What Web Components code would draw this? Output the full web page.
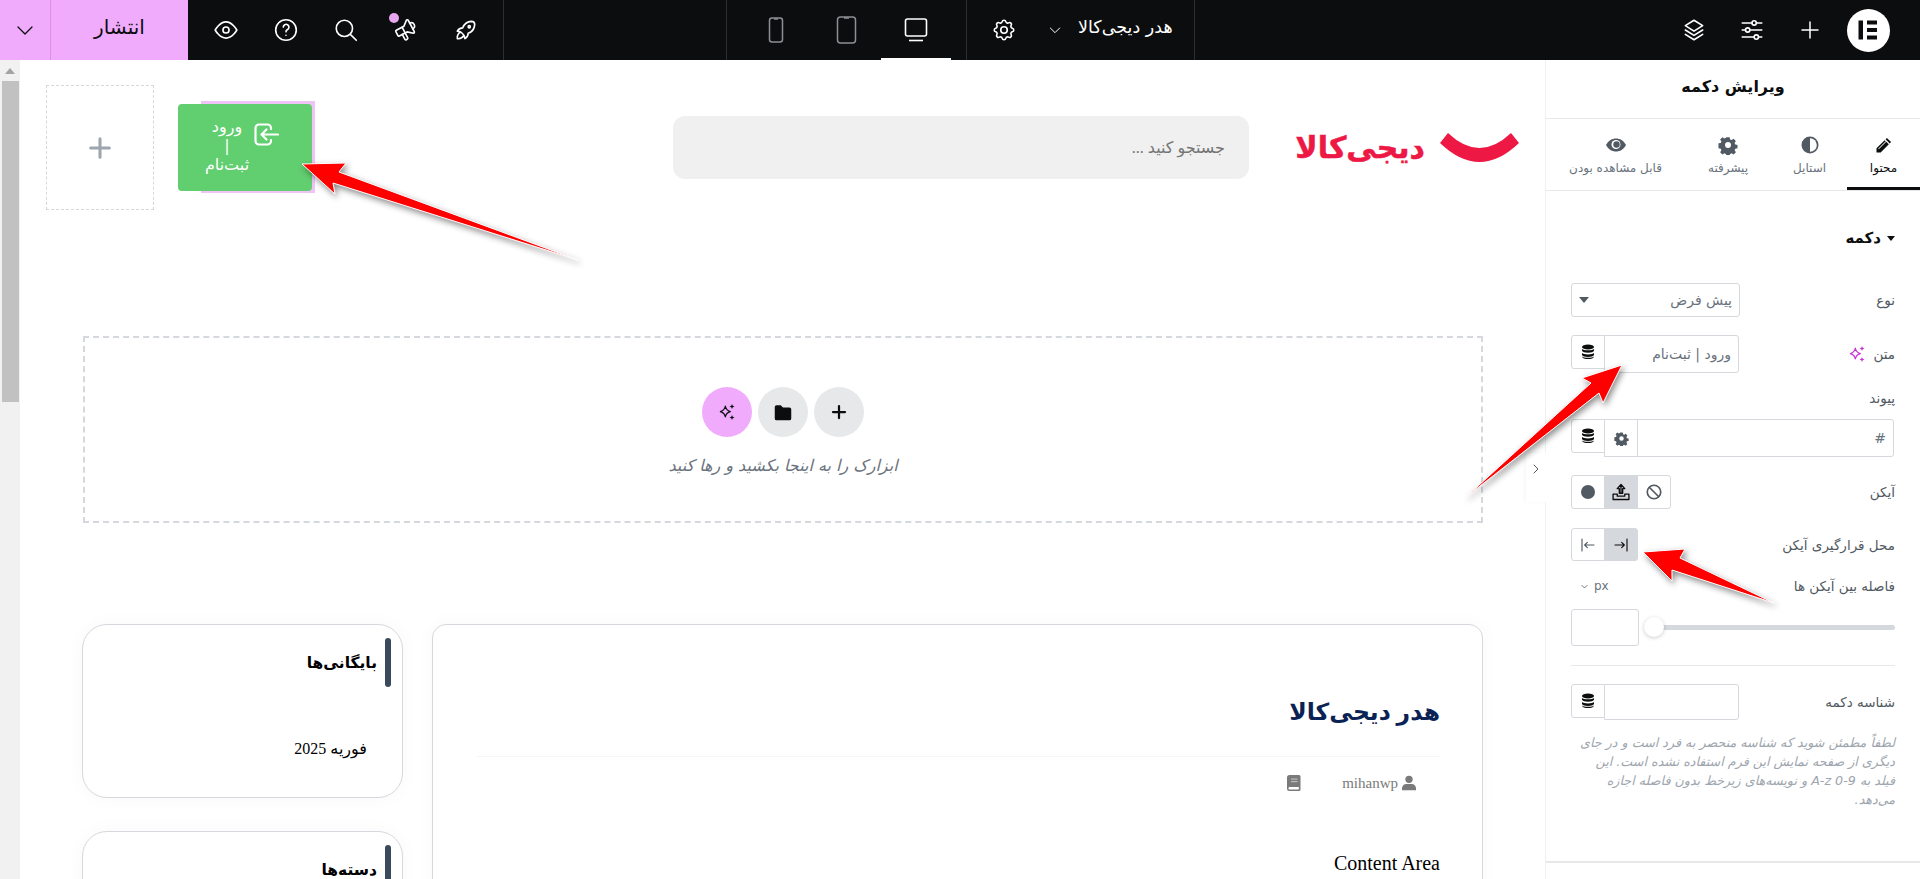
<!DOCTYPE html>
<html lang="fa">
<head>
<meta charset="utf-8">
<title>ویرایش دکمه</title>
<style>
    html, body { margin: 0; padding: 0; height: 879px; overflow: hidden; background: #fff; }
    body { position: relative; font-family: "DejaVu Sans", sans-serif; }
    ed-app { width: 1920px; height: 879px; }
</style>
</head>
<body>
<ed-app></ed-app>
<ed-arrows></ed-arrows>

<script>
const GEAR = 'M10.325 4.317c.426-1.756 2.924-1.756 3.35 0a1.724 1.724 0 0 0 2.573 1.066c1.543-.94 3.31.826 2.37 2.37a1.724 1.724 0 0 0 1.065 2.572c1.756.426 1.756 2.924 0 3.35a1.724 1.724 0 0 0-1.066 2.573c.94 1.543-.826 3.31-2.37 2.37a1.724 1.724 0 0 0-2.572 1.065c-.426 1.756-2.924 1.756-3.35 0a1.724 1.724 0 0 0-2.573-1.066c-1.543.94-3.31-.826-2.37-2.37a1.724 1.724 0 0 0-1.065-2.572c-1.756-.426-1.756-2.924 0-3.35a1.724 1.724 0 0 0 1.066-2.573c-.94-1.543.826-3.31 2.37-2.37c1 .608 2.296.07 2.572-1.065z'

function line(size, inner, width = 1.5) {
    return `<svg width="${size}" height="${size}" viewBox="0 0 24 24" fill="none" stroke="currentColor" stroke-width="${width}" stroke-linecap="round" stroke-linejoin="round">${inner}</svg>`
}
function solid(size, inner) {
    return `<svg width="${size}" height="${size}" viewBox="0 0 24 24" fill="currentColor">${inner}</svg>`
}

const sparkle = `<path d="M10 5c.7 4 2.2 5.6 6 6.500c-3.800.9-5.300 2.500-6 6.500c-.7-4-2.200-5.600-6-6.500c3.800-.9 5.300-2.500 6-6.500z"/><path fill="currentColor" d="M18 2.500l.9 2.100 2.100.9-2.100.9-.9 2.100-.9-2.100-2.100-.9 2.100-.9zM18 15.500l.9 2.100 2.100.9-2.100.9-.9 2.100-.9-2.100-2.100-.9 2.100-.9z" stroke="none"/>`
const dbIcon = `<svg width="14" height="16" viewBox="0 0 14 16" fill="#0c0d0e"><ellipse cx="7" cy="3" rx="6" ry="2.600"/><path d="M1 5c1 1.700 11 1.700 12 0v1.800c-.6 2.600-11.400 2.600-12 0zM1 9c1 1.900 11 1.900 12 0v2c-.6 2.600-11.400 2.600-12 0z"/><path d="M1 12.500c1 1.700 11 1.700 12 0c0 3.400-12 3.400-12 0z"/></svg>`
const COG = '<path fill-rule="evenodd" d="M9.800 1.500h4.400l.6 3 2 .9 2.600-1.700 3.100 3.100-1.700 2.600.9 2 3 .6v4.400l-3 .6-.9 2 1.700 2.600-3.100 3.100-2.600-1.700-2 .9-.6 3H9.800l-.6-3-2-.9-2.600 1.700-3.100-3.100 1.700-2.600-.9-2-3-.6V9.800l3-.6.9-2-1.700-2.600 3.100-3.100 2.600 1.700 2-.9zM12 8a4 4 0 1 0 0 8 4 4 0 0 0 0-8z" transform="translate(1.200 1.200) scale(.9)"/>'

const ICONS = {
    chevron: line(24, '<path d="M5 9l7 7 7-7"/>', 1.3),
    eye: line(26, '<path d="M2 12s4-7.500 10-7.500 10 7.500 10 7.500-4 7.500-10 7.500S2 12 2 12z"/><circle cx="12" cy="12" r="2.800"/>'),
    help: line(26, '<circle cx="12" cy="12" r="9.500"/><path d="M9.500 9.300a2.600 2.600 0 1 1 3.900 2.300c-.9.500-1.400 1.100-1.400 2.100"/><path d="M12 16.800v.1"/>'),
    search: line(26, '<circle cx="10.500" cy="10.500" r="7.500"/><path d="M16 16l5.500 5.500"/>'),
    speaker: line(26, '<g transform="rotate(-28 12 12)"><path d="M18 8a3 3 0 0 1 0 6"/><path d="M10 8v11a1 1 0 0 1-1 1H8a1 1 0 0 1-1-1v-5"/><path d="M12 8l4.700-3.900A1 1 0 0 1 18 5v12a1 1 0 0 1-1.300.9L12 14H4a1 1 0 0 1-1-1V9a1 1 0 0 1 1-1h8"/></g>'),
    rocket: line(26, '<path d="M4 13a8 8 0 0 1 7 7a6 6 0 0 0 3-5a9 9 0 0 0 6-8a3 3 0 0 0-3-3a9 9 0 0 0-8 6a6 6 0 0 0-5 3"/><path d="M7 14a6 6 0 0 0-3 6a6 6 0 0 0 6-3"/><circle cx="15" cy="9" r="1"/>'),
    phone: `<svg width="16" height="26" viewBox="0 0 16 26" fill="none" stroke="currentColor" stroke-width="1.500"><rect x="1.500" y="1" width="13" height="24" rx="2.500"/><path d="M6 2h4"/></svg>`,
    tablet: `<svg width="21" height="28" viewBox="0 0 21 28" fill="none" stroke="currentColor" stroke-width="1.500"><rect x="1.500" y="1" width="18" height="26" rx="3"/><path d="M8 2h5"/></svg>`,
    desktop: `<svg width="24" height="24" viewBox="0 0 24 24" fill="none" stroke="currentColor" stroke-width="1.600"><rect x="1.500" y="1" width="21" height="17" rx="2"/><path d="M5 22.500h14"/></svg>`,
    gear: line(26, `<path d="${GEAR}"/><circle cx="12" cy="12" r="3"/>`),
    plus: line(24, '<path d="M12 4v16M4 12h16"/>'),
    sliders: line(26, '<path d="M3 5.500h9M16 5.500h5M3 12h3M10 12h11M3 18.500h11M18 18.500h3"/><circle cx="14" cy="5.500" r="2"/><circle cx="8" cy="12" r="2"/><circle cx="16" cy="18.500" r="2"/>'),
    layers: line(26, '<path d="M12 3l8 5-8 5-8-5z"/><path d="M4 12l8 5 8-5"/><path d="M4 16l8 5 8-5"/>'),
    pencil: solid(20, '<path d="M15.500 3.500l5 5-1.600 1.600-5-5zM12.800 6.200l5 5L8 21H3v-5z"/><path fill="#fff" d="M5 16.500l9-9 .7.700-9 9z"/>'),
    contrast: `<svg width="20" height="20" viewBox="0 0 20 20"><circle cx="10" cy="10" r="8.500" fill="#515962"/><path d="M10 3.200a6.800 6.800 0 0 1 0 13.600z" fill="#fff"/></svg>`,
    cog: `<svg width="20" height="20" viewBox="0 0 24 24" fill="currentColor">${COG}</svg>`,
    cogSmall: `<svg width="15" height="15" viewBox="0 0 24 24" fill="currentColor">${COG}</svg>`,
    eyeFill: `<svg width="22" height="16" viewBox="0 0 22 16"><path d="M1 8c2.500-4.500 6-6.500 10-6.500S18.500 3.500 21 8c-2.500 4.500-6 6.500-10 6.500S3.500 12.500 1 8z" fill="#515962"/><circle cx="11" cy="7.500" r="4.500" fill="#fff"/><circle cx="11.500" cy="7.500" r="3.200" fill="#515962"/></svg>`,
    ban: line(18, '<circle cx="12" cy="12" r="9"/><path d="M6 6l12 12"/>', 2.200),
    upload: line(20, '<path d="M2.500 14.500h5v2.500h9v-2.500h5v6.500h-19z"/><path d="M12 13V4M7.500 8L12 3l4.500 5h-2.500v5.500H10V8z"/>', 1.600),
    dot: `<svg width="14" height="14" viewBox="0 0 14 14"><circle cx="7" cy="7" r="7" fill="#515962"/></svg>`,
    alignL: line(16, '<path d="M3 3v18M21 12H7M11 8l-4 4 4 4"/>', 1.700),
    alignR: line(16, '<path d="M21 3v18M3 12h14M13 8l4 4-4 4"/>', 1.700),
    sparkle: line(20, sparkle, 1.400),
    folder: solid(22, '<path d="M3 6.500a2 2 0 0 1 2-2h4.500l2.500 2.500h7a2 2 0 0 1 2 2V19a2 2 0 0 1-2 2H5a2 2 0 0 1-2-2z"/>'),
    plusBold: line(18, '<path d="M12 4v16M4 12h16"/>', 3),
    login: `<svg width="25" height="23" viewBox="0 0 25 23" fill="none" stroke="#fff" stroke-width="2.200" stroke-linecap="round" stroke-linejoin="round"><path d="M17 6V5a3.500 3.500 0 0 0-3.500-3.500H5A3.500 3.500 0 0 0 1.500 5v13A3.500 3.500 0 0 0 5 21.500h8.500A3.500 3.500 0 0 0 17 18v-1"/><path d="M24 11.500H8M12.500 6.500l-5 5 5 5"/></svg>`,
    user: solid(16, '<circle cx="12" cy="6.500" r="5.500"/><path d="M1.500 23v-3a6.500 6.500 0 0 1 6.500-6.500h8a6.500 6.500 0 0 1 6.500 6.500v3z"/>'),
    book: `<svg width="14" height="16" viewBox="0 0 14 16"><path d="M2.500 0H12a1.500 1.500 0 0 1 1.500 1.500v13A1.500 1.500 0 0 1 12 16H2.500A2.500 2.500 0 0 1 0 13.500v-11A2.500 2.500 0 0 1 2.500 0z" fill="#7a7a7a"/><rect x="1.500" y="12" width="10.500" height="2.500" rx="1" fill="#fff"/><rect x="4" y="3.500" width="6.500" height="1.200" fill="#bbb"/><rect x="4" y="6" width="6.500" height="1.200" fill="#bbb"/></svg>`
}

class Base extends HTMLElement {
    constructor() {
        super()
        const shadowRoot = this.attachShadow({ mode: 'open' })
        shadowRoot.innerHTML = `<style>${this.constructor.css}</style>` + this.render()
    }
    render() { return '<slot></slot>' }
    attr(name) { return this.getAttribute(name) || '' }
}

/* ---------- top bar ---------- */
class EdTopbar extends Base {
    static css = `
        :host { display: flex; height: 60px; background: #0c0d0e; color: #fff; font-family: "DejaVu Sans", sans-serif; flex: none; }
        .pub { display: flex; width: 188px; background: #f0abfc; color: #0c0d0e; }
        .pub .arrow { width: 51px; display: flex; align-items: center; justify-content: center; border-right: 1px solid #d990e6; box-sizing: border-box; }
        .pub .label { flex: 1; display: flex; align-items: center; justify-content: center; font-size: 20px; padding-bottom: 7px; box-sizing: border-box; }
        .tools { display: flex; width: 316px; padding-left: 8px; box-sizing: border-box; border-right: 1px solid #2d2e30; }
        .btn { width: 60px; display: flex; align-items: center; justify-content: center; position: relative; }
        .dot { position: absolute; left: 13px; top: 13px; width: 10px; height: 10px; border-radius: 50%; background: #e6a7ee; }
        .gap { width: 222px; border-right: 1px solid #2d2e30; }
        .devices { display: flex; width: 240px; padding-left: 14px; box-sizing: border-box; border-right: 1px solid #2d2e30; }
        .dev { width: 70px; display: flex; align-items: center; justify-content: center; color: #8d8f92; box-sizing: border-box; }
        .dev.on { color: #fff; border-bottom: 2px solid #fff; padding-top: 2px; }
        .site { display: flex; align-items: center; width: 228px; padding-left: 24px; box-sizing: border-box; border-right: 1px solid #2d2e30; }
        .site .name { font-size: 17.500px; margin-left: 15px; white-space: nowrap; direction: rtl; padding-bottom: 6px; }
        .site .chev { margin-left: 30px; display: flex; }
        .right { margin-left: auto; display: flex; padding-right: 23px; }
        .right .btn { width: 58px; }
        .logo { width: 43px; height: 43px; border-radius: 50%; background: #fff; display: flex; align-items: center; justify-content: center; margin: 8.500px 0 0 7.500px; }
    `
    render() {
        return `
        <div class="pub">
            <div class="arrow">${ICONS.chevron}</div>
            <div class="label">انتشار</div>
        </div>
        <div class="tools">
            <div class="btn">${ICONS.eye}</div>
            <div class="btn">${ICONS.help}</div>
            <div class="btn">${ICONS.search}</div>
            <div class="btn"><span class="dot"></span>${ICONS.speaker}</div>
            <div class="btn">${ICONS.rocket}</div>
        </div>
        <div class="gap"></div>
        <div class="devices">
            <div class="dev">${ICONS.phone}</div>
            <div class="dev">${ICONS.tablet}</div>
            <div class="dev on">${ICONS.desktop}</div>
        </div>
        <div class="site">
            ${ICONS.gear}
            <span class="chev">${line(16, '<path d="M5 9l7 7 7-7"/>')}</span>
            <span class="name">هدر دیجی‌کالا</span>
        </div>
        <div class="right">
            <div class="btn">${ICONS.layers}</div>
            <div class="btn">${ICONS.sliders}</div>
            <div class="btn">${ICONS.plus}</div>
            <div class="btn" style="display:block">
                <div class="logo"><svg width="20" height="20" viewBox="0 0 20 20" fill="#0c0d0e"><rect x="0.500" y="0.500" width="4.500" height="19"/><rect x="9" y="0.500" width="10" height="4"/><rect x="9" y="8" width="10" height="4"/><rect x="9" y="15.500" width="10" height="4"/></svg></div>
            </div>
        </div>`
    }
}

/* ---------- left scrollbar of the canvas ---------- */
class EdScrollbar extends Base {
    static css = `
        :host { display: block; width: 20px; flex: none; background: #f1f1f1; box-sizing: border-box; padding-top: 8px; }
        .up { width: 0; height: 0; margin: 0 auto; border: 5px solid transparent; border-bottom: 6px solid #a3a3a3; border-top: 0; }
        .thumb { width: 17px; height: 321px; margin: 7px 0 0 2px; background: #c1c1c1; }
    `
    render() { return `<div class="up"></div><div class="thumb"></div>` }
}

/* ---------- page header inside the canvas ---------- */
class EdSiteHeader extends Base {
    static css = `
        :host { display: flex; align-items: flex-start; padding: 25px 0 0 26px; height: 125px; }
        .empty { width: 108px; height: 125px; border: 1px dashed #d5d8dc; box-sizing: border-box; display: flex; align-items: center; justify-content: center; color: #9da5ae; flex: none; }
        .login { position: relative; width: 134px; height: 87px; margin: 19px 0 0 24px; background: #61ce70; border-radius: 4px; color: #fff; display: flex; align-items: flex-start; flex: none; }
        .login::before { content: ""; position: absolute; z-index: -1; left: 23px; right: -3px; top: -3px; bottom: -2px; background: #f0c3f7; }
        .login .txt { direction: rtl; width: 98px; text-align: center; font: 16px/19px "DejaVu Sans", sans-serif; margin-top: 13px; }
        .login .ico { margin-top: 19px; margin-left: -22px; display: flex; }
        .search { width: 576px; height: 63px; margin: 31px 0 0 361px; background: #f0f0f0; border-radius: 12px; direction: rtl; padding-right: 24px; box-sizing: border-box; display: flex; align-items: center; color: #757575; font: 16px "Liberation Serif", "DejaVu Sans", serif; flex: none; }
        .logo { display: flex; align-items: center; direction: ltr; margin: 46px 0 0 51px; gap: 15px; color: #ed1944; flex: none; }
        .logo .word { display: block; width: 125px; text-align: center; font: 700 30px/33px "DejaVu Sans", sans-serif; -webkit-text-stroke: .5px #ed1944; direction: rtl; white-space: nowrap; }
    `
    render() {
        return `
        <div class="empty">${line(28, '<path d="M12 4v16M4 12h16"/>', 2.600)}</div>
        <div class="login">
            <div class="txt">ورود<br>|<br>ثبت‌نام</div>
            <div class="ico">${ICONS.login}</div>
        </div>
        <div class="search">جستجو کنید ...</div>
        <div class="logo">
            <span class="word">دیجی‌کالا</span>
            <svg width="79" height="29" viewBox="0 0 79 29" fill="#ed1944"><path d="M0 10L8 0Q39.500 30 71 0L79 10Q39.500 48 0 10z"/></svg>
        </div>`
    }
}

/* ---------- empty drop zone ---------- */
class EdDropzone extends Base {
    static css = `
        :host { display: flex; flex-direction: column; align-items: center; box-sizing: border-box; width: 1400px; height: 187px; margin: 126px 0 0 63px; border: 2px dashed #d5d8dc; padding-top: 49px; }
        .row { display: flex; gap: 6px; }
        .c { width: 50px; height: 50px; border-radius: 50%; background: #e6e8ea; display: flex; align-items: center; justify-content: center; color: #0c0d0e; }
        .c.ai { background: #f0abfc; }
        .hint { margin-top: 17px; direction: rtl; font: italic 16px/24px "DejaVu Sans", sans-serif; color: #69727d; }
    `
    render() {
        return `
        <div class="row">
            <div class="c ai">${ICONS.sparkle}</div>
            <div class="c">${ICONS.folder}</div>
            <div class="c">${ICONS.plusBold}</div>
        </div>
        <div class="hint">ابزارک را به اینجا بکشید و رها کنید</div>`
    }
}

/* ---------- sidebar widget card ---------- */
class EdWidget extends Base {
    static css = `
        :host { display: block; box-sizing: border-box; width: 321px; height: 174px; border: 1px solid #d5d8dc; border-radius: 25px; background: #fff; box-shadow: 0 0 20px rgba(0,0,0,.03); padding: 13px 11px 0 0; direction: rtl; font-family: "Liberation Serif", "DejaVu Sans", serif; color: #000; }
        .head { display: flex; align-items: center; height: 49px; }
        .bar { width: 6px; height: 49px; border-radius: 3px; background: #3a4a5c; margin-left: 8px; flex: none; }
        .title { font-size: 15.500px; font-weight: 700; }
        .body { font-size: 16px; padding: 52px 24px 0 0; }
    `
    render() {
        return `
        <div class="head"><span class="bar"></span><span class="title">${this.attr('heading')}</span></div>
        <div class="body"><slot></slot></div>`
    }
}

/* ---------- post card ---------- */
class EdPost extends Base {
    static css = `
        :host { display: block; box-sizing: border-box; width: 1051px; height: 400px; border: 1px solid #d5d8dc; border-radius: 14px; background: #fff; box-shadow: 0 0 20px rgba(0,0,0,.03); margin-left: 29px; direction: rtl; padding: 0 42px 0 44px; font-family: "Liberation Serif", "DejaVu Sans", serif; flex: none; }
        h1 { margin: 0; padding-top: 66px; height: 65px; line-height: 42px; font-size: 23.500px; font-weight: 700; color: #0b2354; border-bottom: 1px solid #f6f6f6; }
        .meta { display: flex; align-items: center; height: 26px; margin-top: 13px; color: #7a7a7a; font-size: 15px; padding-right: 23px; }
        .meta .u { display: flex; margin-left: 3px; }
        .meta .b { display: flex; margin-right: 41px; }
        .content { margin-top: 55px; font-size: 20px; line-height: 24px; color: #000; }
    `
    render() {
        return `
        <h1>${this.attr('heading')}</h1>
        <div class="meta"><span class="u">${ICONS.user}</span><span>${this.attr('author')}</span><span class="b">${ICONS.book}</span></div>
        <div class="content"><slot></slot></div>`
    }
}

/* ---------- canvas ---------- */
class EdCanvas extends Base {
    static css = `
        :host { display: flex; flex: 1; min-width: 0; height: 819px; overflow: hidden; background: #fff; }
        .main { flex: 1; min-width: 0; position: relative; isolation: isolate; }
        .cards { display: flex; align-items: flex-start; margin-top: 101px; padding-left: 62px; }
        .side { display: flex; flex-direction: column; gap: 33px; flex: none; }
    `
    render() {
        return `
        <ed-scrollbar></ed-scrollbar>
        <div class="main">
            <ed-site-header></ed-site-header>
            <ed-dropzone></ed-dropzone>
            <div class="cards">
                <div class="side">
                    <ed-widget heading="بایگانی‌ها">فوریه 2025</ed-widget>
                    <ed-widget heading="دسته‌ها"></ed-widget>
                </div>
                <ed-post heading="هدر دیجی‌کالا" author="mihanwp">Content Area</ed-post>
            </div>
        </div>`
    }
}

/* ---------- panel controls ---------- */
class EdField extends Base {
    static css = `
        :host { display: flex; justify-content: space-between; align-items: flex-start; font: 13.500px "DejaVu Sans", sans-serif; color: #515962; }
        .lab { display: flex; align-items: center; gap: 6px; height: 100%; white-space: nowrap; }
        .slot { display: flex; }
    `
    render() {
        const ai = this.hasAttribute('ai') ? `<span style="color:#c930d9;display:flex">${ICONS.sparkle}</span>` : ''
        return `<div class="lab"><span>${this.attr('label')}</span>${ai}</div><div class="slot"><slot></slot></div>`
    }
}

class EdBox extends Base {
    static css = `
        :host { display: flex; align-items: center; justify-content: center; box-sizing: border-box; width: 34px; height: 34px; border: 1px solid #d5d8dc; margin-right: -1px; background: #fff; color: #515962; font: 12px "DejaVu Sans", sans-serif; flex: none; }
        :host([on]) { background: #d5d8dc; color: #0c0d0e; }
        :host(:first-child) { border-radius: 0 3px 3px 0; margin-right: 0; }
        :host(:last-child) { border-radius: 3px 0 0 3px; }
    `
}

class EdPanel extends Base {
    static css = `
        :host { display: flex; flex-direction: column; position: relative; width: 375px; height: 819px; flex: none; background: #fff; box-sizing: border-box; border-left: 1px solid #eff0f1; direction: rtl; font-family: "DejaVu Sans", sans-serif; color: #515962; }
        .title { height: 59px; border-bottom: 1px solid #e6e8ea; display: flex; align-items: center; justify-content: center; font-size: 16px; font-weight: 700; color: #0c0d0e; padding-bottom: 5px; box-sizing: border-box; flex: none; }
        .tabs { display: flex; height: 72px; border-bottom: 1px solid #e6e8ea; box-sizing: border-box; flex: none; }
        .tab { display: flex; flex-direction: column; align-items: center; font-size: 12px; color: #69727d; white-space: nowrap; box-sizing: border-box; }
        .tab i { display: flex; align-items: center; justify-content: center; height: 22px; margin: 15px 0 5px; color: #515962; }
        .tab.on { color: #0c0d0e; border-bottom: 3px solid #0c0d0e; }
        .tab.on i { color: #0c0d0e; }
        .body { padding: 0 25px; }
        .sec { display: flex; align-items: center; gap: 6px; height: 20px; margin-top: 37px; font-size: 15px; font-weight: 700; color: #0c0d0e; }
        .caret { width: 0; height: 0; border: 4px solid transparent; border-top: 5px solid #0c0d0e; border-bottom: 0; }
        .select { width: 169px; height: 34px; box-sizing: border-box; border: 1px solid #d5d8dc; border-radius: 3px; display: flex; align-items: center; justify-content: space-between; padding: 0 7px; font-size: 14px; color: #69727d; }
        .select b { width: 0; height: 0; border: 5px solid transparent; border-top: 6px solid #515962; border-bottom: 0; }
        .txt { box-sizing: border-box; height: 38px; border: 1px solid #d5d8dc; display: flex; align-items: center; padding: 0 7px; font-size: 14px; color: #69727d; border-radius: 0 3px 3px 0; }
        .txt.w135 { width: 135px; }
        .txt.wide { width: 257px; }
        .db { color: #0c0d0e; }
        .lbl { display: flex; justify-content: space-between; align-items: center; height: 18px; font-size: 13.500px; }
        .unit { display: flex; align-items: center; gap: 5px; direction: ltr; font-size: 12px; color: #69727d; margin-left: 9px; }
        .slider { display: flex; align-items: center; height: 37px; }
        .track { flex: 1; height: 5px; background: #d5d8dc; border-radius: 3px; position: relative; }
        .thumb { position: absolute; left: -10px; top: -8px; width: 20px; height: 20px; border-radius: 50%; background: #fff; box-shadow: 0 1px 4px rgba(0,0,0,.2); }
        .num { width: 68px; height: 37px; box-sizing: border-box; border: 1px solid #d5d8dc; border-radius: 3px; margin-right: 15px; flex: none; }
        hr { border: 0; border-top: 1px solid #e6e8ea; margin: 19px 0 18px; }
        .desc { margin: 13px 0 0; font: italic 12.700px/19px "DejaVu Sans", sans-serif; color: #9da5ae; }
        .foot { border-top: 2px solid #e6e8ea; margin-top: 52px; }
        .collapse { position: absolute; left: -20px; top: 393px; width: 20px; height: 49px; background: #fff; box-shadow: -2px 0 4px rgba(0,0,0,.03); display: flex; justify-content: center; padding-top: 10px; box-sizing: border-box; color: #515962; direction: ltr; }
        .tab1 { width: 73px; } .tab2 { width: 75px; } .tab3 { width: 88px; } .tab4 { width: 137px; }
    `
    render() {
        const db = `<ed-box class="db" style="height:34px">${dbIcon}</ed-box>`
        return `
        <div class="collapse">${line(12, '<path d="M8 4l8 8-8 8"/>', 2)}</div>
        <div class="title">ویرایش دکمه</div>
        <div class="tabs">
            <div class="tab tab1 on"><i>${ICONS.pencil}</i>محتوا</div>
            <div class="tab tab2"><i>${ICONS.contrast}</i>استایل</div>
            <div class="tab tab3"><i>${ICONS.cog}</i>پیشرفته</div>
            <div class="tab tab4"><i>${ICONS.eyeFill}</i>قابل مشاهده بودن</div>
        </div>
        <div class="body">
            <div class="sec"><span class="caret"></span>دکمه</div>
            <ed-field label="نوع" style="height:34px;margin-top:35px"><div class="select">پیش فرض<b></b></div></ed-field>
            <ed-field label="متن" ai style="height:38px;margin-top:18px"><div class="txt w135">ورود | ثبت‌نام</div>${db}</ed-field>
            <div class="lbl" style="margin-top:16px">پیوند</div>
            <ed-field style="height:38px;margin-top:12px;justify-content:flex-end"><div class="txt wide">#</div><ed-box style="height:38px">${ICONS.cogSmall}</ed-box>${db}</ed-field>
            <ed-field label="آیکن" style="height:34px;margin-top:18px"><ed-box>${ICONS.ban}</ed-box><ed-box on>${ICONS.upload}</ed-box><ed-box>${ICONS.dot}</ed-box></ed-field>
            <ed-field label="محل قرارگیری آیکن" style="height:33px;margin-top:19px"><ed-box on style="height:33px">${ICONS.alignR}</ed-box><ed-box style="height:33px">${ICONS.alignL}</ed-box></ed-field>
            <div class="lbl" style="margin-top:16px">فاصله بین آیکن ها<span class="unit">${line(9, '<path d="M5 9l7 7 7-7"/>', 2.500)}px</span></div>
            <div class="slider" style="margin-top:14px">
                <div class="track"><span class="thumb"></span></div>
                <div class="num"></div>
            </div>
            <hr>
            <ed-field label="شناسه دکمه" style="height:36px"><div class="txt w135" style="height:36px"></div>${db}</ed-field>
            <p class="desc">لطفاً مطمئن شوید که شناسه منحصر به فرد است و در جای دیگری از صفحه نمایش این فرم استفاده نشده است. این فیلد به A-z 0-9 و نویسه‌های زیرخط بدون فاصله اجازه می‌دهد.</p>
        </div>
        <div class="foot"></div>`
    }
}

/* ---------- root ---------- */
class EdApp extends Base {
    static css = `
        :host { display: flex; flex-direction: column; }
        .row { display: flex; flex: 1; min-height: 0; }
    `
    render() {
        return `
        <ed-topbar></ed-topbar>
        <div class="row">
            <ed-canvas></ed-canvas>
            <ed-panel></ed-panel>
        </div>`
    }
}

/* ---------- red annotation arrows drawn over the screenshot ---------- */
class EdArrows extends Base {
    static css = `
        :host { position: absolute; left: 0; top: 0; width: 1920px; height: 879px; pointer-events: none; }
        svg { display: block; }
        polygon { fill: #f00; stroke: #fff; stroke-width: 1; stroke-linejoin: round; filter: drop-shadow(2px 3px 3px rgba(0,0,0,.45)); }
    `
    render() {
        return `
        <svg width="1920" height="879" viewBox="0 0 1920 879">
            <polygon points="302,164 346,163 339,172 578,260 333,183 335,194"/>
            <polygon points="1622,365 1603,403 1599,393 1466,497 1591,383 1582,378"/>
            <polygon points="1643,552 1685,549 1680,558 1774,603 1672,570 1672,581"/>
        </svg>`
    }
}

customElements.define('ed-topbar', EdTopbar)
customElements.define('ed-scrollbar', EdScrollbar)
customElements.define('ed-site-header', EdSiteHeader)
customElements.define('ed-dropzone', EdDropzone)
customElements.define('ed-widget', EdWidget)
customElements.define('ed-post', EdPost)
customElements.define('ed-canvas', EdCanvas)
customElements.define('ed-field', EdField)
customElements.define('ed-box', EdBox)
customElements.define('ed-panel', EdPanel)
customElements.define('ed-app', EdApp)
customElements.define('ed-arrows', EdArrows)
</script>
</body>
</html>
